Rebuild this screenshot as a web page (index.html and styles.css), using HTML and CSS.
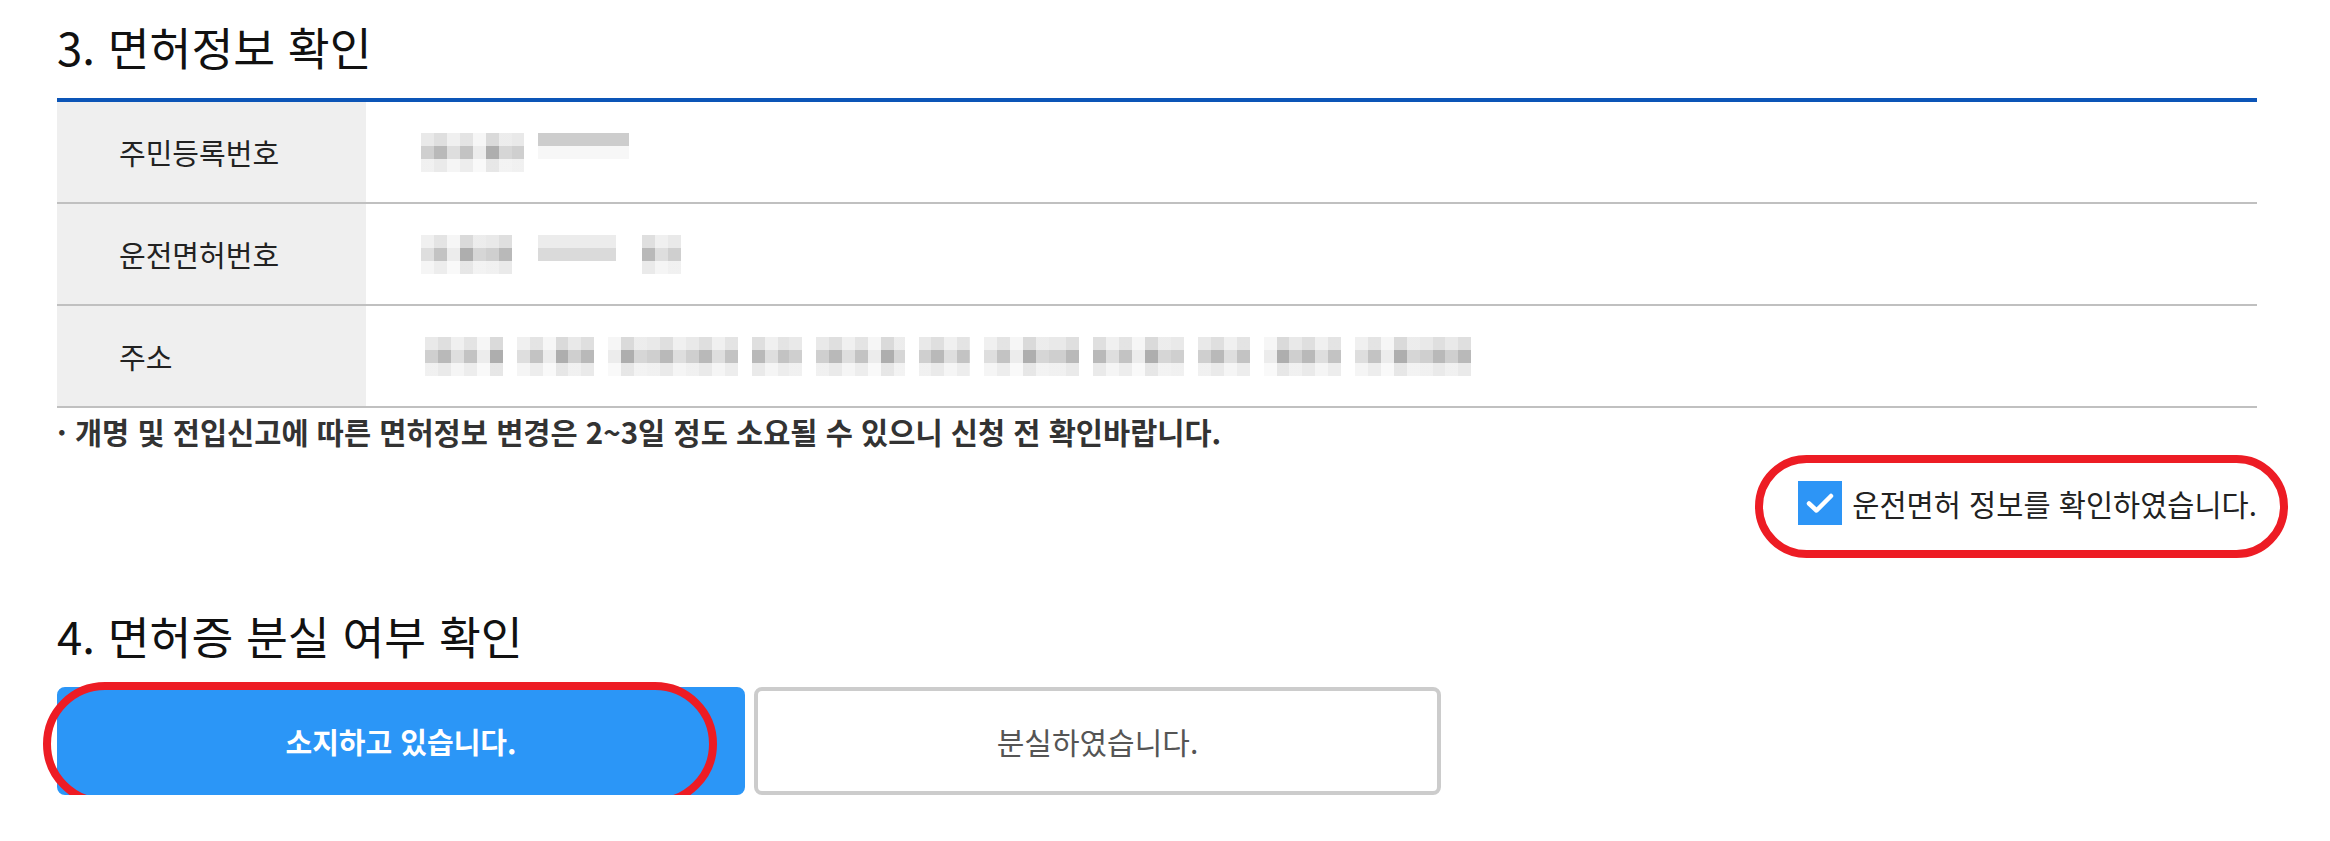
FILE: index.html
```html
<!DOCTYPE html>
<html lang="ko">
<head>
  <meta charset="UTF-8" />
  <meta name="viewport" content="width=device-width, initial-scale=1.0" />
  <title>면허정보 확인</title>
  <link rel="stylesheet" href="styles.css">
</head>
<body>
  <div class="page">

    <!-- 3. 면허정보 -->
    <section class="sec">
      <h2 class="sec-tit">3. 면허정보 확인</h2>
      <div class="info">
        <div class="row">
          <div class="th">주민등록번호</div>
          <div class="td">
            <span class="mz w103"></span><span class="mz-bar w91"></span>
          </div>
        </div>
        <div class="row">
          <div class="th">운전면허번호</div>
          <div class="td">
            <span class="mz w91 sh1"></span><span class="mz-bar2 w78"></span><span class="mz w39 sh2"></span>
          </div>
        </div>
        <div class="row">
          <div class="th">주소</div>
          <div class="td addr">
            <span class="mz" style="width:78px"></span>
            <span class="mz sh1" style="width:77px"></span>
            <span class="mz sh2" style="width:130px"></span>
            <span class="mz sh3" style="width:50px"></span>
            <span class="mz" style="width:89px"></span>
            <span class="mz sh2" style="width:51px"></span>
            <span class="mz sh1" style="width:95px"></span>
            <span class="mz sh3" style="width:91px"></span>
            <span class="mz" style="width:52px"></span>
            <span class="mz sh2" style="width:77px"></span>
            <span class="mz sh1" style="width:116px"></span>
          </div>
        </div>
      </div>
      <p class="note">· 개명 및 전입신고에 따른 면허정보 변경은 2~3일 정도 소요될 수 있으니 신청 전 확인바랍니다.</p>
      <div class="agree">
        <label class="chk">
          <span class="box">
            <svg viewBox="0 0 44 44" width="44" height="44"><polyline points="11,22.5 18.5,29.5 33,15" fill="none" stroke="#fff" stroke-width="4.5" stroke-linecap="round" stroke-linejoin="round"/></svg>
          </span>
          운전면허 정보를 확인하였습니다.
          <span class="mark m1"></span>
        </label>
      </div>
    </section>

    <!-- 4. 분실 여부 -->
    <section class="sec">
      <h2 class="sec-tit t4">4. 면허증 분실 여부 확인</h2>
      <div class="choice">
        <button class="opt on">소지하고 있습니다.</button>
        <button class="opt">분실하였습니다.</button>
        <span class="mark m2"></span>
      </div>
    </section>

  </div>
</body>
</html>
```

FILE: styles.css
```css
/* ===== 기본 ===== */
* { box-sizing: border-box; margin: 0; padding: 0; }
body {
  background: #fff;
  color: #222;
  font-family: "Noto Sans CJK KR", "Noto Sans", sans-serif;
}
.page { padding: 0 73px 0 57px; }

/* ===== 섹션 제목 ===== */
.sec-tit {
  font-size: 45.5px;
  font-weight: 400;
  line-height: 44px;
  color: #111;
  padding-top: 24px;
  margin-bottom: 30px;
}
.sec-tit.t4 { padding-top: 88px; margin-bottom: 30px; }

/* ===== 면허정보 표 ===== */
.info { border-top: 4px solid #0c55b7; }
.row {
  display: grid;
  grid-template-columns: 309px 1fr;
  height: 102px;
  border-bottom: 2px solid #c0c0c0;
}
.th {
  display: flex;
  align-items: center;
  padding-left: 62px;
  background: #efefef;
  font-size: 29px;
  color: #222;
}
.td {
  display: flex;
  align-items: center;
  padding-left: 55px;
}
.addr { gap: 14px; padding-left: 59px; }

/* 개인정보 모자이크 */
.mz {
  display: inline-block;
  height: 39px;
  background:
    linear-gradient(rgba(255,255,255,.55) 0 13px, rgba(255,255,255,0) 13px 26px, rgba(255,255,255,.7) 26px),
    repeating-linear-gradient(90deg, #cfcfcf 0 13px, #b9b9b9 13px 26px, #dedede 26px 39px, #c3c3c3 39px 52px, #ececec 52px 65px, #aeaeae 65px 78px, #d6d6d6 78px 91px);
}
.sh1 { background-position: 0 0, -26px 0; }
.sh2 { background-position: 0 0, -52px 0; }
.sh3 { background-position: 0 0, -13px 0; }
.mz-bar {
  display: inline-block;
  height: 39px;
  margin-left: 14px;
  background: linear-gradient(#cdcdcd 0 13px, #f7f7f7 13px 26px, transparent 26px);
}
.mz-bar2 {
  display: inline-block;
  height: 39px;
  margin: 0 26px;
  background: linear-gradient(#ececec 0 13px, #dadada 13px 26px, transparent 26px);
}
.w103 { width: 103px; }
.w91 { width: 91px; }
.w78 { width: 78px; }
.w39 { width: 39px; }

.note {
  margin-top: 9px;
  font-size: 29.5px;
  font-weight: 700;
  line-height: 28px;
  color: #333;
}

/* ===== 확인 체크 ===== */
.agree {
  display: flex;
  justify-content: flex-end;
  margin-top: 36px;
}
.chk {
  position: relative;
  display: inline-flex;
  align-items: center;
  gap: 10px;
  height: 44px;
  font-size: 29.5px;
  color: #222;
  cursor: pointer;
}
.box {
  width: 44px;
  height: 44px;
  background: #2d95f6;
}
.box svg { display: block; }

/* ===== 분실 여부 선택 ===== */
.choice {
  position: relative;
  display: grid;
  grid-template-columns: 688px 687px;
  gap: 9px;
}
.opt {
  height: 108px;
  border: 4px solid #cccccc;
  border-radius: 8px;
  background: #fff;
  font-family: inherit;
  font-size: 30px;
  color: #555;
  cursor: pointer;
}
.opt.on {
  border-color: #2b96f7;
  background: #2b96f7;
  color: #fff;
  font-size: 29px;
  font-weight: 700;
}

/* ===== 빨간 표시 (주석) ===== */
.mark {
  position: absolute;
  border: 8px solid #ed1c24;
  pointer-events: none;
}
.m1 { left: -43px; right: -31px; top: -26px; bottom: -33px; border-radius: 52px; }
.m2 { left: -14px; top: -5px; width: 674px; height: 124px; border-radius: 62px; }
```
